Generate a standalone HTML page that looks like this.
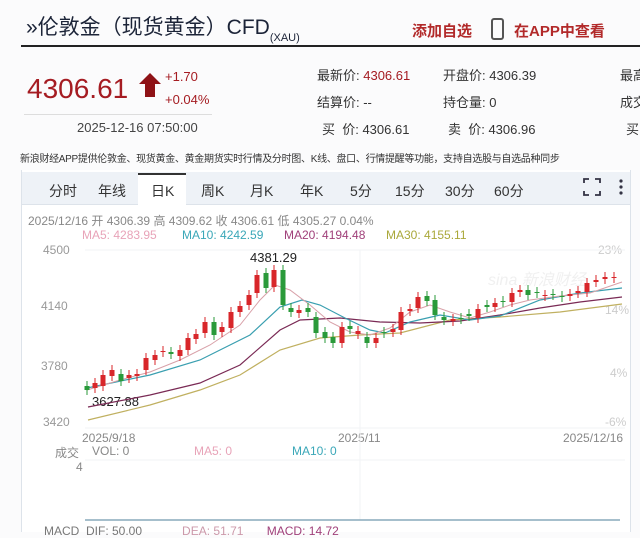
<!DOCTYPE html>
<html><head><meta charset="utf-8">
<style>
*{margin:0;padding:0;box-sizing:border-box}
body{width:640px;height:532px;overflow:hidden;background:#fbfbfc;font-family:"Liberation Sans","Noto Sans CJK SC",sans-serif;position:relative;color:#333}
.a{position:absolute;white-space:nowrap}
</style></head><body>
<div class="a" style="left:26px;top:11px;font-size:21px;color:#1c2438">»伦敦金（现货黄金）CFD<span style="font-size:11px;position:relative;top:7px">(XAU)</span></div>
<div class="a" style="left:412px;top:20px;font-size:15px;color:#b22a2a;font-weight:bold">添加自选</div>
<div class="a" style="left:491px;top:18px;width:13px;height:22px;border:2px solid #555;border-radius:3px"></div>
<div class="a" style="left:514px;top:20px;font-size:15px;color:#b22a2a;font-weight:bold">在APP中查看</div>
<div class="a" style="left:21px;top:45px;width:619px;height:2px;background:#222"></div>

<div class="a" style="left:27px;top:73px;font-size:28px;color:#a51c22">4306.61</div>
<svg class="a" style="left:138px;top:72px" width="24" height="26"><polygon points="12,1 23,12 17,12 17,25 7,25 7,12 1,12" fill="#8e1216"/></svg>
<div class="a" style="left:165px;top:69px;font-size:13px;color:#a51c22">+1.70</div>
<div class="a" style="left:165px;top:92px;font-size:13px;color:#a51c22">+0.04%</div>
<div class="a" style="left:24px;top:114px;width:188px;height:1px;background:#ddd"></div>
<div class="a" style="left:77px;top:120px;font-size:13px;color:#444">2025-12-16 07:50:00</div>

<div class="a" style="left:317px;top:65px;font-size:13px;color:#333">最新价: <span style="color:#a51c22">4306.61</span></div>
<div class="a" style="left:317px;top:92px;font-size:13px;color:#333">结算价: --</div>
<div class="a" style="left:322px;top:119px;font-size:13px;color:#333">买&nbsp; 价: 4306.61</div>
<div class="a" style="left:443px;top:65px;font-size:13px;color:#333">开盘价: 4306.39</div>
<div class="a" style="left:443px;top:92px;font-size:13px;color:#333">持仓量: 0</div>
<div class="a" style="left:448px;top:119px;font-size:13px;color:#333">卖&nbsp; 价: 4306.96</div>
<div class="a" style="left:620px;top:65px;font-size:13px;color:#333">最高</div>
<div class="a" style="left:620px;top:92px;font-size:13px;color:#333">成交</div>
<div class="a" style="left:626px;top:119px;font-size:13px;color:#333">买</div>
<div class="a" style="left:20px;top:150px;font-size:10px;color:#333;letter-spacing:-0.3px">新浪财经APP提供伦敦金、现货黄金、黄金期货实时行情及分时图、K线、盘口、行情提醒等功能，支持自选股与自选品种同步</div>

<div class="a" style="left:21px;top:170px;width:610px;height:362px;border-left:1px solid #dde3ea;border-right:1px solid #dde3ea;background:#fff"></div>
<div class="a" style="left:22px;top:172px;width:608px;height:33px;background:#eef2f7;border-bottom:1px solid #dde3ea"></div>
<div class="a" style="left:138px;top:173px;width:48px;height:33px;background:#fff;border-top:2px solid #333"></div>
<div class="a" style="top:181px;font-size:14px;color:#333;left:0;width:640px">
<span class="a" style="left:49px">分时</span><span class="a" style="left:98px">年线</span><span class="a" style="left:151px">日K</span><span class="a" style="left:201px">周K</span><span class="a" style="left:250px">月K</span><span class="a" style="left:300px">年K</span><span class="a" style="left:350px">5分</span><span class="a" style="left:395px">15分</span><span class="a" style="left:445px">30分</span><span class="a" style="left:494px">60分</span></div>
<svg class="a" style="left:580px;top:175px" width="60" height="26"><path d="M4 8V4h5M15 4h5v4M20 16v4h-5M9 20H4v-4" fill="none" stroke="#334" stroke-width="1.8"/><circle cx="41" cy="6" r="1.6" fill="#334"/><circle cx="41" cy="12" r="1.6" fill="#334"/><circle cx="41" cy="18" r="1.6" fill="#334"/></svg>

<div class="a" style="left:28px;top:212px;font-size:12px;color:#888">2025/12/16 开 4306.39 高 4309.62 收 4306.61 低 4305.27 0.04%</div>
<div class="a" style="left:82px;top:228px;font-size:12px;color:#e8a3b8">MA5: 4283.95</div>
<div class="a" style="left:182px;top:228px;font-size:12px;color:#3aa7b8">MA10: 4242.59</div>
<div class="a" style="left:284px;top:228px;font-size:12px;color:#a0407a">MA20: 4194.48</div>
<div class="a" style="left:386px;top:228px;font-size:12px;color:#aaa83a">MA30: 4155.11</div>
<div class="a" style="left:43px;top:243px;font-size:12px;color:#999">4500</div>
<div class="a" style="left:41px;top:299px;font-size:12px;color:#999">4140</div>
<div class="a" style="left:41px;top:359px;font-size:12px;color:#999">3780</div>
<div class="a" style="left:43px;top:415px;font-size:12px;color:#999">3420</div>
<div class="a" style="left:598px;top:243px;font-size:12px;color:#ccc">23%</div>
<div class="a" style="left:605px;top:303px;font-size:12px;color:#ccc">14%</div>
<div class="a" style="left:610px;top:366px;font-size:12px;color:#ccc">4%</div>
<div class="a" style="left:605px;top:415px;font-size:12px;color:#ccc">-6%</div>
<div class="a" style="left:488px;top:266px;font-size:16px;color:#f0f0f0;font-style:italic">sina 新浪财经</div>
<div class="a" style="left:250px;top:250px;font-size:13px;color:#222">4381.29</div>
<div class="a" style="left:92px;top:394px;font-size:13px;color:#222">3627.88</div>
<div class="a" style="left:82px;top:431px;font-size:12px;color:#888">2025/9/18</div>
<div class="a" style="left:338px;top:431px;font-size:12px;color:#888">2025/11</div>
<div class="a" style="left:563px;top:431px;font-size:12px;color:#888">2025/12/16</div>
<div class="a" style="left:55px;top:444px;font-size:12px;color:#888">成交</div>
<div class="a" style="left:76px;top:460px;font-size:12px;color:#888">4</div>
<div class="a" style="left:92px;top:444px;font-size:12px;color:#888">VOL: 0</div>
<div class="a" style="left:194px;top:444px;font-size:12px;color:#e8a3b8">MA5: 0</div>
<div class="a" style="left:292px;top:444px;font-size:12px;color:#3aa7b8">MA10: 0</div>
<div class="a" style="left:44px;top:524px;font-size:12px;color:#777">MACD&nbsp; DIF: 50.00&nbsp;&nbsp;&nbsp;&nbsp;&nbsp;&nbsp;&nbsp;&nbsp;&nbsp;&nbsp;&nbsp; <span style="color:#c9a">DEA: 51.71</span>&nbsp;&nbsp;&nbsp;&nbsp;&nbsp;&nbsp; <span style="color:#a0407a">MACD: 14.72</span></div>

<svg class="a" style="left:0;top:0" width="640" height="532" id="c">
<g stroke="#f2f3f5" stroke-width="1"><line x1="85" y1="250" x2="625" y2="250"/><line x1="85" y1="428" x2="625" y2="428"/><line x1="85" y1="460" x2="625" y2="460"/><line x1="360" y1="250" x2="360" y2="520"/></g>
<line x1="85" y1="520" x2="620" y2="520" stroke="#8ab" stroke-width="1.5"/>
<polyline fill="none" stroke="#c0b060" stroke-width="1.2" points="88,420 150,405 200,390 240,375 280,350 320,338 360,335 400,333 450,320 500,317 560,312 622,304"/>
<polyline fill="none" stroke="#7a2a55" stroke-width="1.2" points="88,407 150,395 200,383 240,365 280,330 300,320 340,318 380,322 420,323 460,321 500,315 540,308 580,302 622,297"/>
<polyline fill="none" stroke="#3a9fb0" stroke-width="1.2" points="87,388 150,375 200,360 250,335 280,307 302,300 320,305 345,318 370,330 385,333 410,322 440,315 470,320 500,316 540,300 580,293 622,288"/>
<polyline fill="none" stroke="#d8a0a8" stroke-width="1" points="87,390 120,380 150,372 180,360 210,345 240,325 260,300 275,285 290,290 310,305 330,322 350,332 370,335 390,328 410,312 430,305 450,312 470,318 490,312 510,305 530,300 560,296 590,293 622,282"/>
<g id="k"></g>
</svg>
<script>
var d=[[87,386,390,1],[95,383,388,0],[103,375,386,0],[112,370,376,0],[121,374,381,1],[129,375,378,0],[137,374,376,0],[146,358,370,0],[155,355,360,0],[163,351,352,0],[171,352,354,1],[180,350,356,0],[188,338,350,0],[196,334,339,0],[205,322,333,0],[214,322,335,1],[222,327,332,0],[231,312,328,0],[240,306,312,0],[249,295,305,0],[257,275,293,0],[266,273,288,1],[274,270,287,0],[283,270,305,1],[291,308,312,1],[299,310,313,0],[308,308,312,1],[316,317,333,1],[325,332,338,1],[333,337,343,1],[342,327,343,0],[350,326,329,1],[358,331,334,0],[367,337,343,1],[376,338,343,0],[384,332,333,1],[393,329,332,0],[401,312,330,0],[410,309,311,0],[418,297,308,0],[427,296,301,1],[435,300,315,1],[444,317,320,1],[453,319,321,0],[461,318,319,1],[469,314,316,1],[478,309,318,0],[487,305,307,1],[495,303,307,0],[503,301,302,1],[512,293,302,0],[520,290,292,0],[528,290,295,1],[537,292,293,1],[545,295,296,0],[553,294,295,1],[562,296,297,1],[570,294,296,0],[578,291,293,0],[587,283,292,0],[596,280,282,0],[605,277,279,0],[614,277,278,0]];
var s='';d.forEach(function(c){var col=c[3]?'#2a9a3a':'#d8262a';s+='<line x1="'+c[0]+'" x2="'+c[0]+'" y1="'+(c[1]-5)+'" y2="'+(c[2]+5)+'" stroke="'+col+'" stroke-width="1"/><rect x="'+(c[0]-2.5)+'" y="'+c[1]+'" width="5" height="'+Math.max(1,c[2]-c[1])+'" fill="'+col+'"/>';});
document.getElementById('k').innerHTML=s;
</script>
</body></html>
